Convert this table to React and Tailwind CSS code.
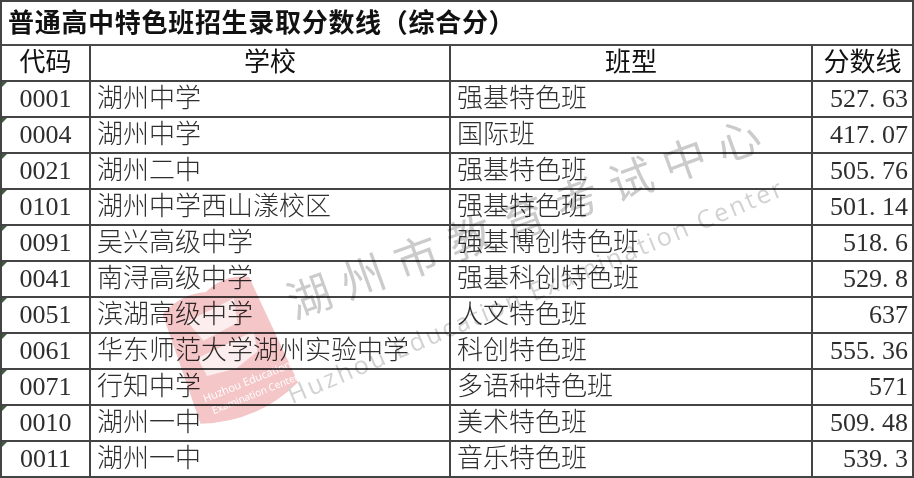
import React from 'react';

const rows = [
  ['0001', '湖州中学', '强基特色班', '527.63'],
  ['0004', '湖州中学', '国际班', '417.07'],
  ['0021', '湖州二中', '强基特色班', '505.76'],
  ['0101', '湖州中学西山漾校区', '强基特色班', '501.14'],
  ['0091', '吴兴高级中学', '强基博创特色班', '518.6'],
  ['0041', '南浔高级中学', '强基科创特色班', '529.8'],
  ['0051', '滨湖高级中学', '人文特色班', '637'],
  ['0061', '华东师范大学湖州实验中学', '科创特色班', '555.36'],
  ['0071', '行知中学', '多语种特色班', '571'],
  ['0010', '湖州一中', '美术特色班', '509.48'],
  ['0011', '湖州一中', '音乐特色班', '539.3'],
];

// SimSun style score: the period takes a full half-width cell
function Score({ value }) {
  const [a, b] = value.split('.');
  return (
    <span>
      {a}
      {b !== undefined && (
        <>
          <span className="inline-block w-[13px] text-left">.</span>
          {b}
        </>
      )}
    </span>
  );
}

function Watermark() {
  const chars = '湖州市教育考试中心'.split('');
  return (
    <div className="pointer-events-none absolute inset-0 mix-blend-multiply">
      {/* red seal */}
      <svg className="absolute left-[140px] top-[258px]" width="180" height="200" viewBox="0 0 180 200">
        <g transform="rotate(-22 90 100)" opacity="0.3">
          <path
            d="M44 34 Q70 22 92 30 Q116 20 138 32 L144 148 Q92 170 38 150 Z"
            fill="#d9434a"
          />
          <path d="M64 50 L116 46 L110 70 L72 74 Z" fill="#f6c6c6" />
          <path d="M60 88 L122 84 L118 104 L92 112 L62 108 Z" fill="#f6c6c6" />
          <text x="50" y="132" fontSize="11" fill="#ffffff" fontFamily="Open Sans, sans-serif">Huzhou Education</text>
          <text x="54" y="146" fontSize="10" fill="#ffffff" fontFamily="Open Sans, sans-serif">Examination Center</text>
        </g>
      </svg>

      {/* chinese brush text */}
      <div className="absolute left-[280px] top-[266px] flex h-[56px] origin-[28px_28px] rotate-[-20deg]">
        {chars.map((c, i) => (
          <span
            key={i}
            className="w-[57px] text-center text-[44px] leading-[56px] text-[#cbcbcb] font-['Noto_Sans_CJK_SC',sans-serif]"
          >
            {c}
          </span>
        ))}
      </div>

      {/* english text */}
      <div className="absolute left-[288px] top-[380px] h-[30px] origin-[0_50%] rotate-[-23deg] whitespace-nowrap text-[25px] leading-[30px] tracking-[2.5px] text-[#d2d2d2] font-['Open_Sans',sans-serif]">
        Huzhou Education Examination Center
      </div>
    </div>
  );
}

export default function App() {
  return (
    <div className="relative h-[478px] w-[914px] overflow-hidden bg-white font-['Liberation_Serif','Noto_Sans_CJK_SC',serif]">
      <div className="flex flex-col border-l-2 border-r-2 border-t-2 border-[#444]">
        {/* title */}
        <div className="flex h-[44px] items-center border-b-2 border-[#4a4a4a] pl-[6px] pt-[2px] text-[26px] font-bold leading-none tracking-[0.7px] text-[#111]">
          普通高中特色班招生录取分数线（综合分）
        </div>

        {/* header */}
        <div className="flex h-[36px] border-b-2 border-[#444] text-[26px] leading-none text-[#111]">
          <div className="flex w-[89px] items-center justify-center border-r-2 border-[#444]">代码</div>
          <div className="flex w-[360px] items-center justify-center border-r-2 border-[#444]">学校</div>
          <div className="flex w-[362px] items-center justify-center border-r-2 border-[#444]">班型</div>
          <div className="flex flex-1 items-center justify-center">分数线</div>
        </div>

        {/* data */}
        {rows.map(([code, school, type, score]) => (
          <div key={code} className="flex h-[36px] border-b-2 border-[#444] text-[26px] leading-none text-[#2e2e2e]">
            <div className="relative flex w-[89px] items-center justify-center border-r-2 border-[#444]">
              <span className="absolute left-0 top-0 h-0 w-0 border-r-[5px] border-t-[5px] border-r-transparent border-t-[#3f5f3f]" />
              {code}
            </div>
            <div className="flex w-[360px] items-center border-r-2 border-[#444] pl-[6px] font-light">{school}</div>
            <div className="flex w-[362px] items-center border-r-2 border-[#444] pl-[6px] font-light">{type}</div>
            <div className="flex flex-1 items-center justify-end pr-[4px]">
              <Score value={score} />
            </div>
          </div>
        ))}
      </div>
      <Watermark />
    </div>
  );
}
